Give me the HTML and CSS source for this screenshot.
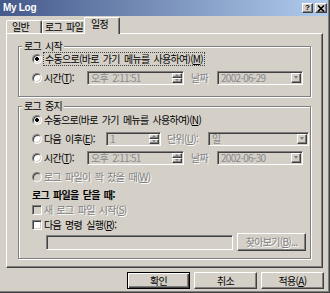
FILE: index.html
```html
<!DOCTYPE html>
<html lang="ko">
  <head>
    <meta charset="utf-8" />
    <title>My Log</title>
    <link rel="stylesheet" href="styles.css">
  </head>

  <body>
    <div class="window">
      <div class="titlebar">
        <span class="title">My Log</span>
        <div class="caption-buttons">
          <span class="cap-btn help">?</span>
          <span class="cap-btn close">
            <svg width="8" height="7" viewBox="0 0 8 7"><path d="M1 0.5 L7 6.5 M7 0.5 L1 6.5" stroke="#000" stroke-width="1.6" fill="none" /></svg>
          </span>
        </div>
      </div>

      <div class="client">
        <div class="tabs">
          <div class="tab tab-general">일반</div>
          <div class="tab tab-file">로그 파일</div>
          <div class="tab tab-schedule active">일정</div>
        </div>

        <div class="panel">
          <div class="group group-start">
            <div class="legend">로그 시작</div>
            <div class="row">
              <span class="radio checked"></span>
              <span class="focus">수동으로(바로 가기 메뉴를 사용하여)(<u>M</u>)</span>
            </div>
            <div class="row">
              <span class="radio"></span>
              <span class="label label-time">시간(<u>T</u>):</span>
              <span class="field time-field">
                <span class="field-text">오후&nbsp;&nbsp;2:11:51</span>
                <span class="spin"><span class="spin-up"></span><span class="spin-down"></span></span>
              </span>
              <span class="label label-date disabled">날짜</span>
              <span class="field date-field">
                <span class="field-text">2002-06-29</span>
                <span class="drop-btn"></span>
              </span>
            </div>
          </div>

          <div class="group group-stop">
            <div class="legend">로그 중지</div>
            <div class="row row-first">
              <span class="radio checked"></span>
              <span class="label">수동으로(바로 가기 메뉴를 사용하여)(<u>N</u>)</span>
            </div>
            <div class="row">
              <span class="radio"></span>
              <span class="label label-after">다음 이후(<u>E</u>):</span>
              <span class="field num-field">
                <span class="field-text">1</span>
                <span class="spin"><span class="spin-up"></span><span class="spin-down"></span></span>
              </span>
              <span class="label label-unit disabled">단위(<u>U</u>):</span>
              <span class="field unit-field">
                <span class="field-text">일</span>
                <span class="drop-btn"></span>
              </span>
            </div>
            <div class="row">
              <span class="radio"></span>
              <span class="label label-time">시간(<u>T</u>):</span>
              <span class="field time-field">
                <span class="field-text">오후&nbsp;&nbsp;2:11:51</span>
                <span class="spin"><span class="spin-up"></span><span class="spin-down"></span></span>
              </span>
              <span class="label label-date disabled">날짜</span>
              <span class="field date-field">
                <span class="field-text">2002-06-30</span>
                <span class="drop-btn"></span>
              </span>
            </div>
            <div class="row">
              <span class="radio off"></span>
              <span class="label disabled">로그 파일이 꽉 찼을 때(<u>W</u>)</span>
            </div>
            <div class="row row-heading">
              <span class="heading">로그 파일을 닫을 때:</span>
            </div>
            <div class="row row-check">
              <span class="check off"></span>
              <span class="label disabled">새 로그 파일 시작(<u>S</u>)</span>
            </div>
            <div class="row row-check2">
              <span class="check"></span>
              <span class="label">다음 명령 실행(<u>R</u>):</span>
            </div>
            <div class="row row-command">
              <span class="field command-field"></span>
              <span class="btn browse-btn disabled">찾아보기(<u>B</u>)...</span>
            </div>
          </div>
        </div>

        <div class="buttons">
          <span class="btn default">확인</span>
          <span class="btn">취소</span>
          <span class="btn">적용(<u>A</u>)</span>
        </div>
      </div>
    </div>
  </body>
</html>
```

FILE: styles.css
```css
body {
  margin: 0;
  background-color: #d4d0c8;
  font-family: "Noto Sans CJK KR", "Liberation Sans", sans-serif;
  font-size: 10px;
  letter-spacing: -0.7px;
  word-spacing: 2px;
  line-height: 12px;
  color: #000;
}

.window {
  width: 330px;
  height: 293px;
  box-sizing: border-box;
  border-right: 1px solid #404040;
  border-bottom: 1px solid #404040;
  box-shadow: inset -1px -1px 0 #808080;
}

/* title bar */
.titlebar {
  height: 16px;
  margin-right: 1px;
  display: flex;
  align-items: center;
  justify-content: space-between;
  background: linear-gradient(to right, #45598a, #b0cced);
}
.title {
  padding-left: 3px;
  font-family: "Liberation Sans", sans-serif;
  font-weight: bold;
  font-size: 10px;
  letter-spacing: -0.3px;
  word-spacing: 0;
  color: #fff;
}
.caption-buttons {
  display: flex;
  gap: 2px;
  margin-right: 1px;
}
.cap-btn {
  height: 10px;
  box-sizing: border-box;
  display: flex;
  align-items: center;
  justify-content: center;
  background: #d4d0c8;
  border: 1px solid;
  border-color: #fff #404040 #404040 #fff;
  box-shadow: inset -1px -1px 0 #808080;
}
.help {
  width: 11px;
  font-family: "Liberation Sans", sans-serif;
  font-weight: bold;
  font-size: 8px;
  line-height: 8px;
  letter-spacing: 0;
}
.close {
  width: 12px;
}

/* tabs */
.client {
  padding-left: 6px;
}
.tabs {
  display: flex;
  align-items: flex-end;
  height: 16px;
  margin-top: 1px;
}
.tab {
  height: 13px;
  box-sizing: border-box;
  border-top: 1px solid #fff;
  border-left: 1px solid #fff;
  border-right: 1px solid #404040;
  border-radius: 2px 2px 0 0;
  box-shadow: inset -1px 0 0 #808080;
  line-height: 11px;
}
.tab-general {
  width: 36px;
  padding-left: 5px;
}
.tab-file {
  width: 44px;
  padding-left: 2px;
}
.tab.active {
  position: relative;
  z-index: 1;
  width: 36px;
  height: 17px;
  margin-left: -2px;
  margin-bottom: -1px;
  padding-left: 6px;
  background: #d4d0c8;
  line-height: 12px;
}

/* panel */
.panel {
  width: 317px;
  height: 235px;
  box-sizing: border-box;
  border: 1px solid;
  border-color: #fff #404040 #404040 #fff;
  box-shadow: inset -1px -1px 0 #808080;
  overflow: hidden;
}
.group {
  margin: 12px 11px 0 11px;
  padding: 0 0 9px 13px;
  border: 1px solid #808080;
  box-shadow: inset 1px 1px 0 #fff, 1px 1px 0 #fff;
}
.group-stop {
  margin-top: 9px;
  padding-bottom: 7px;
}
.legend {
  width: fit-content;
  height: 12px;
  margin: -7px 0 -3px -10px;
  padding: 0 2px;
  background: #d4d0c8;
}

.row {
  display: flex;
  align-items: center;
  height: 19px;
  white-space: nowrap;
}
.row-first {
  margin-top: 1px;
}
.row-heading {
  height: 17px;
}
.row-check {
  height: 14px;
}
.row-check2 {
  height: 15px;
}
.row-command {
  height: 18px;
  margin-top: 1px;
  padding-left: 14px;
}

.heading {
  font-weight: bold;
}
.disabled {
  color: #808080;
  text-shadow: 1px 1px 0 #fff;
}
u {
  text-decoration-thickness: 1px;
  text-underline-offset: 1px;
}

/* radio and check marks */
.radio,
.check {
  flex: none;
  width: 10px;
  height: 10px;
  box-sizing: border-box;
  margin-right: 2px;
  border: 1px solid;
  border-color: #808080 #fff #fff #808080;
  box-shadow: inset 1px 1px 0 #404040, inset -1px -1px 0 #d4d0c8;
  background: #fff;
}
.radio {
  border-radius: 50%;
}
.radio.checked {
  background: radial-gradient(circle, #000 0 1.6px, #fff 2.2px);
}
.radio.off,
.check.off {
  background: #d4d0c8;
}

.focus {
  padding: 0 1px;
  outline: 1px dotted #444;
}

.label-time {
  width: 43px;
}
.label-after {
  width: 62px;
}
.label-date {
  width: 26px;
  margin-left: 7px;
}
.label-unit {
  width: 41px;
  margin-left: 6px;
}

/* edit fields */
.field {
  flex: none;
  display: flex;
  align-items: center;
  height: 14px;
  box-sizing: border-box;
  padding: 1px 1px 1px 3px;
  border: 1px solid;
  border-color: #808080 #fff #fff #808080;
  box-shadow: inset 1px 1px 0 #404040, inset -1px -1px 0 #d4d0c8;
  color: #8a8a8a;
}
.field-text {
  flex: 1;
  line-height: 10px;
  word-spacing: 0;
}
.time-field {
  width: 97px;
}
.date-field {
  width: 86px;
}
.num-field {
  width: 55px;
}
.unit-field {
  width: 101px;
}
.command-field {
  width: 187px;
  height: 15px;
}

.spin {
  display: flex;
  flex-direction: column;
  width: 10px;
  height: 10px;
}
.spin-up,
.spin-down,
.drop-btn {
  display: flex;
  align-items: center;
  justify-content: center;
  box-sizing: border-box;
  background: #d4d0c8;
  border: 1px solid;
  border-color: #fff #404040 #404040 #fff;
  box-shadow: inset -1px -1px 0 #808080;
}
.spin-up,
.spin-down {
  flex: 1;
}
.spin-up::after {
  content: "";
  border-left: 2px solid transparent;
  border-right: 2px solid transparent;
  border-bottom: 2px solid #808080;
}
.spin-down::after {
  content: "";
  border-left: 2px solid transparent;
  border-right: 2px solid transparent;
  border-top: 2px solid #808080;
}
.drop-btn {
  width: 10px;
  height: 10px;
}
.drop-btn::after {
  content: "";
  border-left: 2.5px solid transparent;
  border-right: 2.5px solid transparent;
  border-top: 3px solid #808080;
}

/* push buttons */
.btn {
  display: flex;
  align-items: center;
  justify-content: center;
  box-sizing: border-box;
  border: 1px solid;
  border-color: #fff #404040 #404040 #fff;
  box-shadow: inset -1px -1px 0 #808080;
  background: #d4d0c8;
}
.browse-btn {
  width: 69px;
  height: 18px;
  margin-left: 4px;
}
.buttons {
  display: flex;
  justify-content: flex-end;
  gap: 4px;
  width: 318px;
  margin-top: 4px;
}
.buttons .btn {
  width: 63px;
  height: 17px;
}
.btn.default {
  border-color: #000;
  box-shadow: inset 1px 1px 0 #fff, inset -1px -1px 0 #404040, inset -2px -2px 0 #808080;
}
```
